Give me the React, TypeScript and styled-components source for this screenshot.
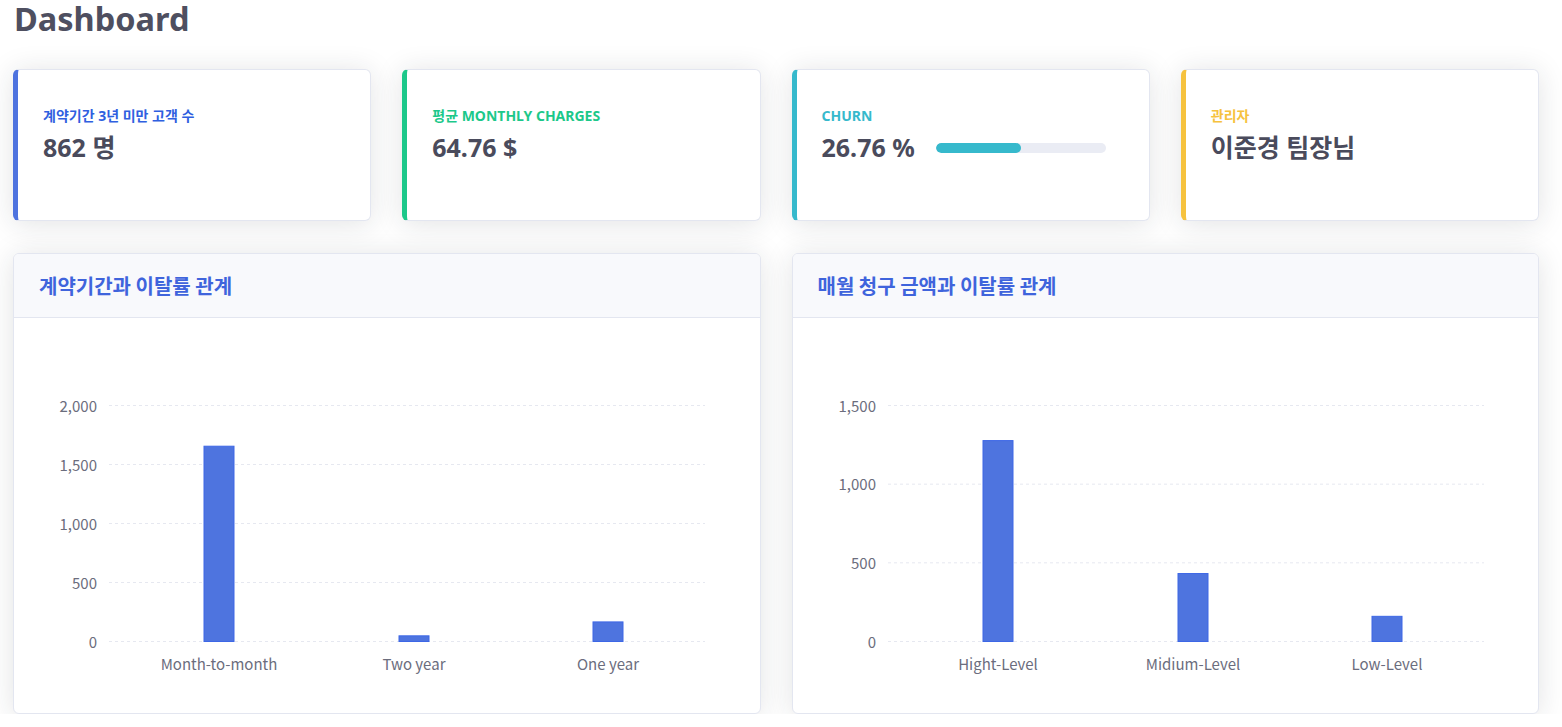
import React from "react";
import styled, { createGlobalStyle } from "styled-components";

const GlobalStyle = createGlobalStyle`
  html, body { margin: 0; padding: 0; background: #ffffff; }
  body { font-family: "Noto Sans", "Noto Sans CJK KR", sans-serif; }
  * { box-sizing: border-box; }
`;

const Page = styled.div`
  width: 1562px;
  padding: 0 23px 0 13px;
`;

const Title = styled.h1`
  margin: 0;
  padding: 0 0 0 1px;
  font-family: "Noto Sans", "Noto Sans CJK KR", sans-serif;
  font-size: 32.5px;
  line-height: 38px;
  font-weight: 700;
  color: #4e4f60;
`;

const CardRow = styled.div`
  display: grid;
  grid-template-columns: repeat(4, 1fr);
  gap: 31px;
  margin-top: 31px;
`;

const StatCard = styled.div<{ $accent: string }>`
  height: 152px;
  background: #fff;
  border: 1px solid #e3e6f0;
  border-left: 5px solid ${(p) => p.$accent};
  border-radius: 6px;
  box-shadow: 0 0.15rem 1.75rem 0 rgba(33, 40, 50, 0.13);
  padding: 36px 25px 0 25px;
`;

const StatLabel = styled.div<{ $color: string }>`
  font-family: "Noto Sans", "Noto Sans CJK KR", sans-serif;
  font-size: 14px;
  line-height: 20px;
  font-weight: 700;
  color: ${(p) => p.$color};
`;

const StatValueRow = styled.div`
  display: flex;
  align-items: center;
  gap: 21px;
  margin-top: 5px;
`;

const StatValue = styled.div`
  font-family: "Noto Sans", "Noto Sans CJK KR", sans-serif;
  font-size: 25px;
  line-height: 32px;
  font-weight: 700;
  color: #4a4b5c;
`;

const Progress = styled.div`
  width: 170px;
  height: 10px;
  border-radius: 5px;
  background: #eaecf4;
  overflow: hidden;
  margin-top: 1px;
`;

const ProgressFill = styled.div`
  height: 100%;
  border-radius: 5px;
  background: #36b9cc;
`;

const ChartRow = styled.div`
  display: grid;
  grid-template-columns: 1fr 1fr;
  gap: 31px;
  margin-top: 32px;
`;

const ChartCard = styled.div`
  background: #fff;
  border: 1px solid #e3e6f0;
  border-radius: 6px;
  box-shadow: 0 0.15rem 1.75rem 0 rgba(33, 40, 50, 0.13);
  overflow: hidden;
`;

const ChartHeader = styled.div`
  height: 64px;
  background: #f8f9fc;
  border-bottom: 1px solid #e3e6f0;
  display: flex;
  align-items: center;
  padding: 0 25px;
`;

const ChartTitle = styled.h6`
  margin: 0;
  font-family: "Noto Sans CJK KR", sans-serif;
  font-size: 20px;
  font-weight: 700;
  color: #3f64dc;
`;

const ChartBody = styled.div`
  height: 395px;
`;

const ChartSvg = styled.svg`
  display: block;
  font-family: "Noto Sans CJK KR", "Noto Sans", sans-serif;
`;

type Bar = { label: string; value: number };

const Y0 = 323;
const Y1 = 87;
const GX0 = 95;
const GX1 = 691;
const CENTERS = [205, 400, 594];

function BarChart({ ticks, bars }: { ticks: number[]; bars: Bar[] }) {
  const max = ticks[ticks.length - 1];
  const y = (v: number) => Y0 - (v / max) * (Y0 - Y1);
  return (
    <ChartSvg width={747} height={395} viewBox="0 0 747 395">
      {ticks.map((t) => (
        <g key={t}>
          <line
            x1={GX0}
            x2={GX1}
            y1={y(t) + 0.5}
            y2={y(t) + 0.5}
            stroke="#e6e8f0"
            strokeWidth={1}
            strokeDasharray="3 3"
          />
          <text
            x={83}
            y={y(t)}
            textAnchor="end"
            dominantBaseline="central"
            fontSize={15}
            fill="#6b6d7d"
          >
            {t.toLocaleString("en-US")}
          </text>
        </g>
      ))}
      {bars.map((b, i) => (
        <g key={b.label}>
          <rect
            x={CENTERS[i] - 15}
            y={y(b.value) + 0.5}
            width={30}
            height={Y0 - y(b.value)}
            fill="#4e74df"
            stroke="#3d67e6"
            strokeWidth={1}
          />
          <text
            x={CENTERS[i]}
            y={345}
            textAnchor="middle"
            dominantBaseline="central"
            fontSize={15}
            fill="#6b6d7d"
          >
            {b.label}
          </text>
        </g>
      ))}
    </ChartSvg>
  );
}

export default function App() {
  return (
    <>
      <GlobalStyle />
      <Page>
        <Title>Dashboard</Title>
        <CardRow>
          <StatCard $accent="#4e73df">
            <StatLabel $color="#2f5fe0">계약기간 3년 미만 고객 수</StatLabel>
            <StatValueRow>
              <StatValue>862 명</StatValue>
            </StatValueRow>
          </StatCard>
          <StatCard $accent="#1cc88a">
            <StatLabel $color="#1cc88a">평균 MONTHLY CHARGES</StatLabel>
            <StatValueRow>
              <StatValue>64.76 $</StatValue>
            </StatValueRow>
          </StatCard>
          <StatCard $accent="#36b9cc">
            <StatLabel $color="#36b9cc">CHURN</StatLabel>
            <StatValueRow>
              <StatValue>26.76 %</StatValue>
              <Progress>
                <ProgressFill style={{ width: "50%" }} />
              </Progress>
            </StatValueRow>
          </StatCard>
          <StatCard $accent="#f6c23e">
            <StatLabel $color="#f6c23e">관리자</StatLabel>
            <StatValueRow>
              <StatValue>이준경 팀장님</StatValue>
            </StatValueRow>
          </StatCard>
        </CardRow>
        <ChartRow>
          <ChartCard>
            <ChartHeader>
              <ChartTitle>계약기간과 이탈률 관계</ChartTitle>
            </ChartHeader>
            <ChartBody>
              <BarChart
                ticks={[0, 500, 1000, 1500, 2000]}
                bars={[
                  { label: "Month-to-month", value: 1655 },
                  { label: "Two year", value: 48 },
                  { label: "One year", value: 166 },
                ]}
              />
            </ChartBody>
          </ChartCard>
          <ChartCard>
            <ChartHeader>
              <ChartTitle>매월 청구 금액과 이탈률 관계</ChartTitle>
            </ChartHeader>
            <ChartBody>
              <BarChart
                ticks={[0, 500, 1000, 1500]}
                bars={[
                  { label: "Hight-Level", value: 1277 },
                  { label: "Midium-Level", value: 432 },
                  { label: "Low-Level", value: 160 },
                ]}
              />
            </ChartBody>
          </ChartCard>
        </ChartRow>
      </Page>
    </>
  );
}
